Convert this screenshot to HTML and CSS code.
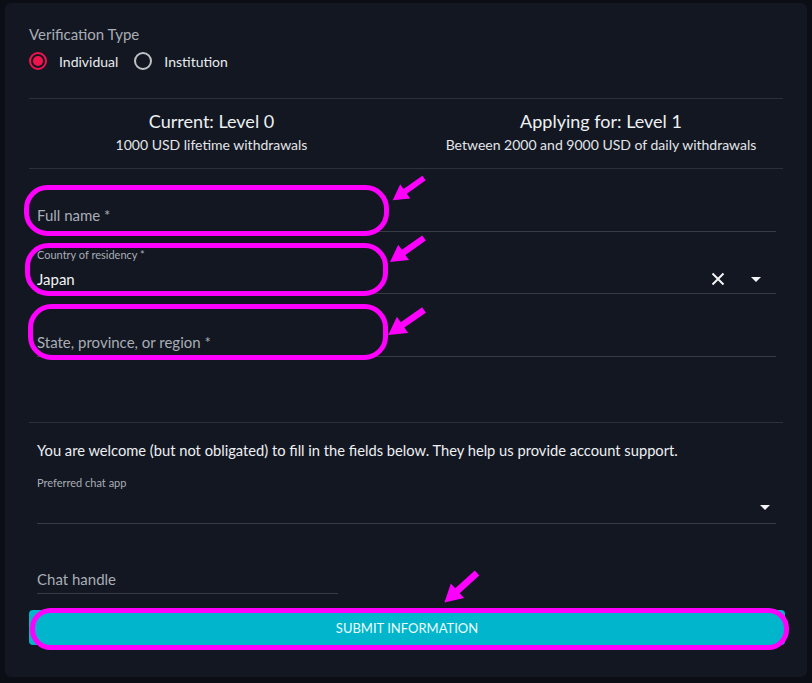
FILE: index.html
```html
<!DOCTYPE html>
<html lang="en">
  <head>
    <meta charset="UTF-8" />
    <title>Verification</title>
    <link rel="stylesheet" href="styles.css">
  </head>
  <body>
    <div class="panel">
      <div class="type-label">Verification Type</div>
      <div class="radios">
        <label class="radio"><span class="dot dot-on"></span>Individual</label>
        <label class="radio"><span class="dot"></span>Institution</label>
      </div>

      <div class="levels">
        <div class="level level-left">
          <div class="level-title">Current: Level 0</div>
          <div class="level-sub">1000 USD lifetime withdrawals</div>
        </div>
        <div class="level level-right">
          <div class="level-title">Applying for: Level 1</div>
          <div class="level-sub">Between 2000 and 9000 USD of daily withdrawals</div>
        </div>
      </div>

      <div class="field field-name">
        <span class="placeholder">Full name *</span>
      </div>
      <div class="field field-country">
        <span class="small-label">Country of residency *</span>
        <div class="value-row">
          <span class="value">Japan</span>
          <svg class="clear" width="14" height="14" viewBox="0 0 14 14">
            <path d="M1.5 1.5 L12.5 12.5 M12.5 1.5 L1.5 12.5" stroke="#f2f3f5" stroke-width="2" />
          </svg>
          <svg class="caret" width="10" height="5" viewBox="0 0 10 5">
            <path d="M0 0 L10 0 L5 5 Z" fill="#f2f3f5" />
          </svg>
        </div>
      </div>
      <div class="field field-state">
        <span class="placeholder">State, province, or region *</span>
      </div>

      <div class="optional">
        <p class="note">You are welcome (but not obligated) to fill in the fields below. They help us provide account support.</p>
        <div class="field field-chat-app">
          <span class="small-label">Preferred chat app</span>
          <div class="value-row">
            <span class="value"></span>
            <svg class="caret caret-end" width="10" height="5" viewBox="0 0 10 5">
              <path d="M0 0 L10 0 L5 5 Z" fill="#f2f3f5" />
            </svg>
          </div>
        </div>
        <div class="field field-handle">
          <span class="placeholder">Chat handle</span>
        </div>
      </div>

      <button class="submit">SUBMIT INFORMATION</button>
    </div>

    <!-- highlight marks drawn over the form -->
    <svg class="marks" width="812" height="683" viewBox="0 0 812 683">
      <g fill="none" stroke="#ff00ff" stroke-width="5">
        <rect x="26.5" y="187.5" width="360" height="46" rx="21" />
        <rect x="27.5" y="245.5" width="358" height="48" rx="21" />
        <rect x="30.5" y="306.5" width="355" height="51" rx="21" />
        <rect x="32.5" y="610.5" width="754" height="37" rx="18" />
      </g>
      <g fill="#ff00ff">
        <polygon points="0,-3 24,-3 24,-9 40,0 24,9 24,3 0,3" transform="translate(424 178) rotate(144.6) scale(0.96)" />
        <polygon points="0,-3 24,-3 24,-9 40,0 24,9 24,3 0,3" transform="translate(424 238) rotate(144.8) scale(1.04)" />
        <polygon points="0,-3 24,-3 24,-9 40,0 24,9 24,3 0,3" transform="translate(424 310) rotate(145.2) scale(1.09)" />
        <polygon points="0,-3 24,-3 24,-9 40,0 24,9 24,3 0,3" transform="translate(477 573) rotate(137.7) scale(1.1)" />
      </g>
    </svg>
  </body>
</html>
```

FILE: styles.css
```css
body {
  margin: 0;
  background: #0b0e14;
  font-family: Lato, "Liberation Sans", sans-serif;
  color: #e9ebee;
  position: relative;
  width: 812px;
  height: 683px;
  overflow: hidden;
}

.panel {
  margin: 3px 5px 0 5px;
  padding: 22px 24px 32px 24px;
  background: #121722;
  border-radius: 6px;
}

.type-label {
  font-size: 15px;
  line-height: 18px;
  color: #a9adb5;
}

.radios {
  display: flex;
  gap: 16px;
  margin-top: 6px;
  padding-bottom: 25px;
  border-bottom: 1px solid #2c3039;
}

.radio {
  display: flex;
  align-items: center;
  height: 24px;
  font-size: 14px;
  color: #e9ebee;
}

.dot {
  box-sizing: border-box;
  width: 18px;
  height: 18px;
  border: 2px solid #bfc1c5;
  border-radius: 50%;
  margin-right: 12px;
  position: relative;
}

.dot-on {
  border-color: #f0134d;
}

.dot-on::after {
  content: "";
  position: absolute;
  left: 2px;
  top: 2px;
  width: 10px;
  height: 10px;
  border-radius: 50%;
  background: #f0134d;
}

.levels {
  display: grid;
  grid-template-columns: 1fr 1fr;
  padding: 12px 0 15px 0;
  border-bottom: 1px solid #2c3039;
  text-align: center;
}

.level-left {
  padding-right: 12px;
}

.level-right {
  padding-left: 13px;
}

.level-title {
  font-size: 18px;
  line-height: 21px;
  color: #eef0f2;
}

.level-sub {
  margin-top: 4px;
  font-size: 14px;
  line-height: 17px;
  color: #e3e5e8;
}

.field {
  box-sizing: border-box;
  display: flex;
  flex-direction: column;
  justify-content: flex-end;
  margin: 0 7px 0 8px;
  padding-bottom: 5px;
  border-bottom: 1px solid #373b44;
}

.field-name {
  height: 63px;
  padding-bottom: 6px;
}

.field-country {
  height: 62px;
  padding-bottom: 4px;
}

.field-state {
  height: 63px;
  padding-bottom: 4px;
}

.placeholder {
  font-size: 15px;
  line-height: 20px;
  color: #a9adb5;
}

.small-label {
  font-size: 11px;
  line-height: 14px;
  color: #a9adb5;
  margin-bottom: 7px;
}

.value-row {
  display: flex;
  align-items: center;
  height: 20px;
}

.value {
  flex: 1;
  font-size: 15px;
  color: #f2f3f5;
}

.clear {
  margin-right: 26px;
}

.caret {
  margin-right: 15px;
}

.caret-end {
  margin-right: 6px;
}

.optional {
  margin-top: 65px;
  border-top: 1px solid #2c3039;
}

.note {
  margin: 0 0 0 8px;
  padding-top: 18px;
  font-size: 14.7px;
  line-height: 18px;
  color: #eef0f2;
}

.field-chat-app {
  height: 65px;
  justify-content: space-between;
  padding-top: 17px;
  padding-bottom: 6px;
}

.field-chat-app .small-label {
  margin-bottom: 0;
}

.field-handle {
  width: 301px;
  height: 70px;
  padding-bottom: 4px;
}

.submit {
  display: block;
  width: calc(100% + 2px);
  height: 35px;
  margin-top: 16px;
  border: none;
  border-radius: 4px;
  background: #00b5cc;
  color: #eefcff;
  font-family: Lato, "Liberation Sans", sans-serif;
  font-size: 13px;
  cursor: pointer;
}

.marks {
  position: absolute;
  left: 0;
  top: 0;
  pointer-events: none;
}
```
